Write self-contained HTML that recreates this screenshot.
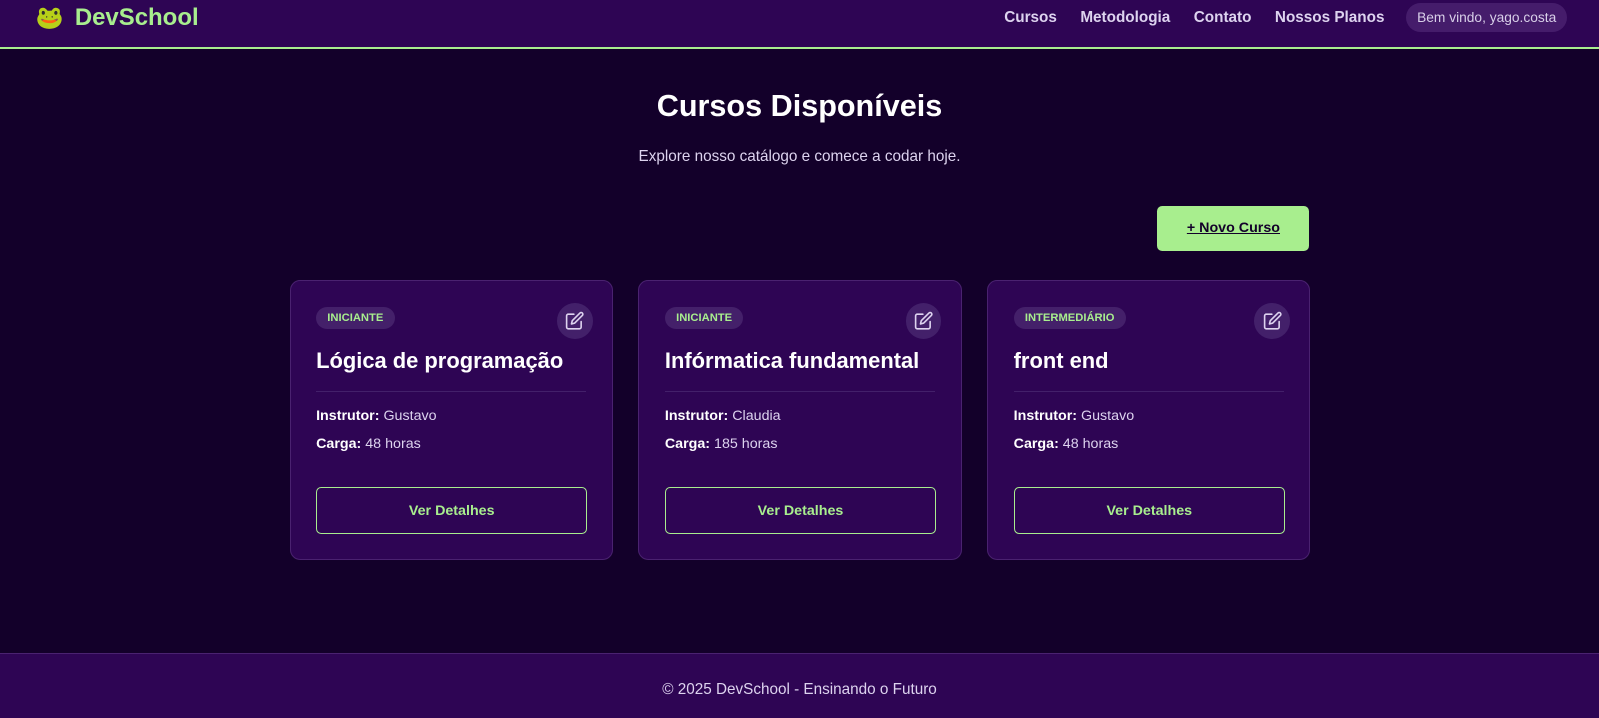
<!DOCTYPE html>
<html><head><meta charset="utf-8"><style>
*{box-sizing:border-box;margin:0;padding:0}
body{width:1599px;height:718px;background:#13002a;font-family:"Liberation Sans","DejaVu Sans",sans-serif;color:#fff;overflow:hidden}
#w{position:relative;width:1568px;height:704px;zoom:1.0198}
header{position:absolute;left:0;top:0;width:1568px;height:48px;background:#2e0554;border-bottom:2px solid #a8ee8e}
.logo{position:absolute;left:35px;top:4px;font-size:23.5px;font-weight:bold;color:#a8ee8e;display:flex;align-items:center;gap:11px}
nav{position:absolute;right:31px;top:3px;display:flex;align-items:center;gap:23px;font-size:15px;font-weight:bold;color:#ddd3ef}
.user{background:#451c6b;border-radius:15px;padding:7px 11px;font-weight:normal;font-size:13.5px;color:#d8cfe8;margin-left:-2px}
h1{position:absolute;top:87px;width:100%;text-align:center;font-size:30px}
.sub{position:absolute;top:145px;width:100%;text-align:center;font-size:15px;color:#ddd3ef}
.new{position:absolute;left:1135px;top:202px;width:149px;height:44px;background:#a8ee8e;border-radius:5px;color:#13002a;font-weight:bold;font-size:14px;text-decoration:underline;display:flex;align-items:center;justify-content:center}
.card{position:absolute;top:275px;width:317px;height:274px;background:#2e0554;border:1px solid #4a2270;border-radius:10px;padding:25px}
.badge{display:inline-block;background:#44206a;color:#a8ee8e;font-size:11px;font-weight:bold;padding:5px 11px;border-radius:12px}
.edit{position:absolute;right:19px;top:21px;width:35px;height:35px;border-radius:50%;background:#43206a;display:flex;align-items:center;justify-content:center}
.card h2{font-size:21.5px;margin-top:19px;padding-bottom:16px;border-bottom:1px solid #43206a}
.card p{font-size:14px;color:#ddd3ef;margin-top:16px}
.card p+p{margin-top:12px}
.card b{color:#fff}
.btn{position:absolute;left:25px;top:202px;width:266px;height:46px;border:1px solid #a8ee8e;border-radius:5px;color:#a8ee8e;font-weight:bold;font-size:14px;display:flex;align-items:center;justify-content:center}
footer{position:absolute;left:0;top:640px;width:1568px;height:64px;background:#2e0554;border-top:1px solid #4a2270;text-align:center;padding-top:27px;font-size:15px;color:#ddd3ef}
</style></head><body><div id="w">
<header>
<div class="logo"><span style="font-size:22px">🐸</span>DevSchool</div>
<nav><span>Cursos</span><span>Metodologia</span><span>Contato</span><span>Nossos Planos</span><span class="user">Bem vindo, yago.costa</span></nav>
</header>
<h1>Cursos Disponíveis</h1>
<div class="sub">Explore nosso catálogo e comece a codar hoje.</div>
<div class="new">+ Novo Curso</div>

<div class="card" style="left:284px"><span class="badge">INICIANTE</span>
<div class="edit"><svg width="19" height="19" viewBox="0 0 24 24" fill="none" stroke="#ddd3ef" stroke-width="2" stroke-linecap="round" stroke-linejoin="round"><path d="M11 4H4a2 2 0 0 0-2 2v14a2 2 0 0 0 2 2h14a2 2 0 0 0 2-2v-7"/><path d="M18.5 2.5a2.1 2.1 0 0 1 3 3L12 15l-4 1 1-4z"/></svg></div>
<h2>Lógica de programação</h2><p><b>Instrutor:</b> Gustavo</p><p><b>Carga:</b> 48 horas</p><div class="btn">Ver Detalhes</div></div>

<div class="card" style="left:626px"><span class="badge">INICIANTE</span>
<div class="edit"><svg width="19" height="19" viewBox="0 0 24 24" fill="none" stroke="#ddd3ef" stroke-width="2" stroke-linecap="round" stroke-linejoin="round"><path d="M11 4H4a2 2 0 0 0-2 2v14a2 2 0 0 0 2 2h14a2 2 0 0 0 2-2v-7"/><path d="M18.5 2.5a2.1 2.1 0 0 1 3 3L12 15l-4 1 1-4z"/></svg></div>
<h2>Infórmatica fundamental</h2><p><b>Instrutor:</b> Claudia</p><p><b>Carga:</b> 185 horas</p><div class="btn">Ver Detalhes</div></div>

<div class="card" style="left:968px"><span class="badge">INTERMEDIÁRIO</span>
<div class="edit"><svg width="19" height="19" viewBox="0 0 24 24" fill="none" stroke="#ddd3ef" stroke-width="2" stroke-linecap="round" stroke-linejoin="round"><path d="M11 4H4a2 2 0 0 0-2 2v14a2 2 0 0 0 2 2h14a2 2 0 0 0 2-2v-7"/><path d="M18.5 2.5a2.1 2.1 0 0 1 3 3L12 15l-4 1 1-4z"/></svg></div>
<h2>front end</h2><p><b>Instrutor:</b> Gustavo</p><p><b>Carga:</b> 48 horas</p><div class="btn">Ver Detalhes</div></div>

<footer>© 2025 DevSchool - Ensinando o Futuro</footer>
</div></body></html>
